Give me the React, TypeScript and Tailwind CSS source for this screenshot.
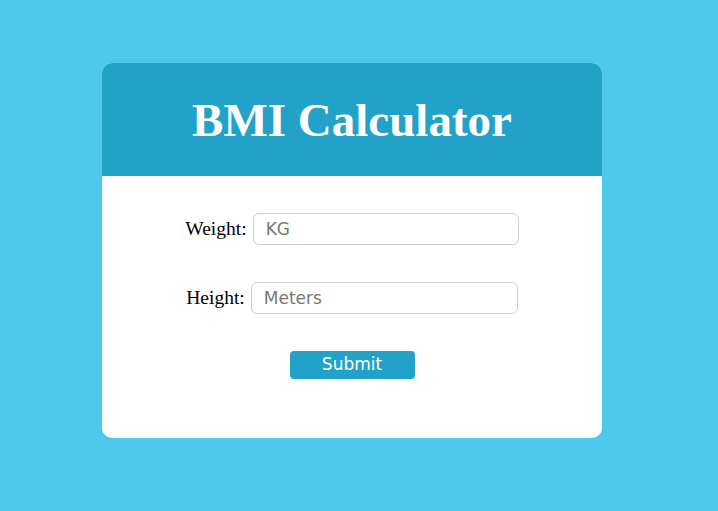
export default function App() {
  return (
    <div className="min-h-[511px] w-full bg-[#4ec9ed] pt-[63px]">
      <div className="ml-[102px] w-[500px] overflow-hidden rounded-[10px] bg-white">
        {/* Header */}
        <div className="flex h-[113px] items-center justify-center bg-[#22a2c9]">
          <h1 className="pt-[2px] font-['Liberation_Serif',serif] text-[47px] font-bold leading-none text-white">
            BMI Calculator
          </h1>
        </div>

        {/* Form */}
        <form
          className="flex flex-col items-center gap-[37px] pt-[37px] pb-[59px]"
          onSubmit={(e) => e.preventDefault()}
        >
          <div className="flex items-center gap-[6px]">
            <label className="font-['Liberation_Serif',serif] text-[19.5px] text-black">Weight:</label>
            <input
              type="text"
              placeholder="KG"
              className="h-[32px] w-[266px] rounded-[6px] border border-[#cfcfcf] px-[12px] font-['DejaVu_Sans',sans-serif] text-[17px] text-black outline-none placeholder:text-[#777]"
            />
          </div>
          <div className="flex items-center gap-[6px]">
            <label className="font-['Liberation_Serif',serif] text-[19.5px] text-black">Height:</label>
            <input
              type="text"
              placeholder="Meters"
              className="h-[32px] w-[267px] rounded-[6px] border border-[#cfcfcf] px-[12px] font-['DejaVu_Sans',sans-serif] text-[17px] text-black outline-none placeholder:text-[#777]"
            />
          </div>
          <button
            type="submit"
            className="h-[28px] w-[125px] rounded-[4px] bg-[#22a2c9] font-['DejaVu_Sans',sans-serif] text-[17px] text-white"
          >
            Submit
          </button>
        </form>
      </div>
    </div>
  );
}
